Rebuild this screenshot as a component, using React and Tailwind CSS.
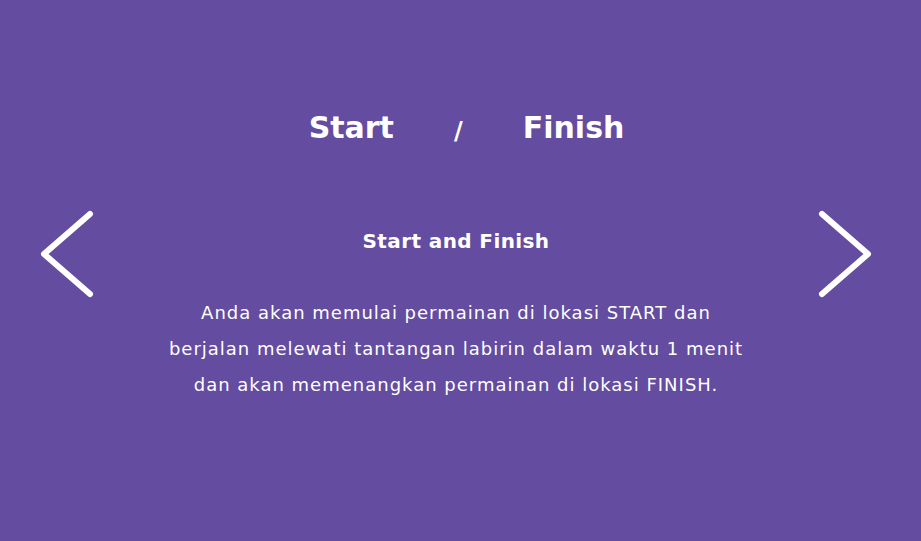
import React from 'react';

const Chevron = ({ dir }) => (
  <svg width="56" height="92" viewBox="0 0 56 92" fill="none" stroke="white" strokeWidth={6} strokeLinecap="round" strokeLinejoin="round">
    {dir === 'left' ? <path d="M52 6 L6 46 L52 86" /> : <path d="M4 6 L50 46 L4 86" />}
  </svg>
);

const App = () => {
  return (
    <div className="w-[921px] h-[541px] bg-[#644ca0] text-white overflow-hidden" style={{ fontFamily: '"DejaVu Sans", sans-serif' }}>
      <div className="pt-[101px] pl-[12px] flex items-center justify-center gap-[60px] text-[30px] leading-[48px] font-bold">
        <span>Start</span>
        <span className="text-[24px] mt-[6px]">/</span>
        <span>Finish</span>
      </div>

      <div className="mt-[53px] flex items-start justify-between pl-[38px] pr-[47px]">
        <button className="focus:outline-none">
          <Chevron dir="left" />
        </button>
        <div className="flex-1 flex flex-col items-center text-center">
          <h2 className="mt-[18px] text-[20px] leading-[30px] font-bold tracking-[0.4px]">Start and Finish</h2>
          <p className="mt-[39px] text-[18px] leading-[36px] tracking-[1px]">
            Anda akan memulai permainan di lokasi START dan
            <br />
            berjalan melewati tantangan labirin dalam waktu 1 menit
            <br />
            dan akan memenangkan permainan di lokasi FINISH.
          </p>
        </div>
        <button className="focus:outline-none">
          <Chevron dir="right" />
        </button>
      </div>
    </div>
  );
};

export default App;
